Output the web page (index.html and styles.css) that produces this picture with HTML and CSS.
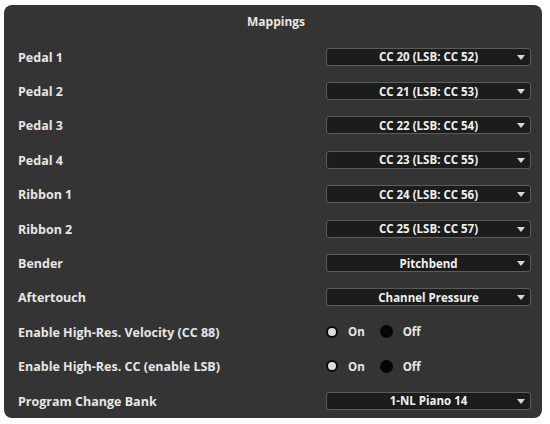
FILE: index.html
```html
<!DOCTYPE html>
<html lang="en">
<head>
  <meta charset="UTF-8">
  <title>Mappings</title>
  <link rel="stylesheet" href="styles.css">
</head>
<body>
  <div class="panel">
    <div class="title">Mappings</div>

    <div class="row">
      <span class="label">Pedal 1</span>
      <div class="select"><span>CC 20 (LSB: CC 52)</span><i class="arrow"></i></div>
    </div>
    <div class="row">
      <span class="label">Pedal 2</span>
      <div class="select"><span>CC 21 (LSB: CC 53)</span><i class="arrow"></i></div>
    </div>
    <div class="row">
      <span class="label">Pedal 3</span>
      <div class="select"><span>CC 22 (LSB: CC 54)</span><i class="arrow"></i></div>
    </div>
    <div class="row">
      <span class="label">Pedal 4</span>
      <div class="select"><span>CC 23 (LSB: CC 55)</span><i class="arrow"></i></div>
    </div>
    <div class="row">
      <span class="label">Ribbon 1</span>
      <div class="select"><span>CC 24 (LSB: CC 56)</span><i class="arrow"></i></div>
    </div>
    <div class="row">
      <span class="label">Ribbon 2</span>
      <div class="select"><span>CC 25 (LSB: CC 57)</span><i class="arrow"></i></div>
    </div>
    <div class="row">
      <span class="label">Bender</span>
      <div class="select"><span>Pitchbend</span><i class="arrow"></i></div>
    </div>
    <div class="row">
      <span class="label">Aftertouch</span>
      <div class="select"><span>Channel Pressure</span><i class="arrow"></i></div>
    </div>
    <div class="row">
      <span class="label">Enable High-Res. Velocity (CC 88)</span>
      <div class="radios">
        <span class="radio on"></span><span class="opt">On</span>
        <span class="radio"></span><span class="opt">Off</span>
      </div>
    </div>
    <div class="row">
      <span class="label">Enable High-Res. CC (enable LSB)</span>
      <div class="radios">
        <span class="radio on"></span><span class="opt">On</span>
        <span class="radio"></span><span class="opt">Off</span>
      </div>
    </div>
    <div class="row">
      <span class="label">Program Change Bank</span>
      <div class="select"><span>1-NL Piano 14</span><i class="arrow"></i></div>
    </div>
  </div>
</body>
</html>
```

FILE: styles.css
```css
body {
  margin: 0;
  background: #fff;
  font-family: "Open Sans", "Noto Sans", sans-serif;
  font-weight: 700;
  font-size: 12.5px;
  color: #e6e6e6;
}
.panel {
  margin: 5px 0 0 4px;
  width: 538px;
  height: 413px;
  box-sizing: border-box;
  padding: 0 11px 0 14px;
  background: #343434;
  border-radius: 8px;
}
.title {
  height: 34.5px;
  line-height: 34px;
  text-align: center;
  font-size: 12px;
  padding-left: 3px;
}
.row {
  height: 34.4px;
  display: flex;
  align-items: center;
  justify-content: space-between;
}
.label {
  padding-top: 1px;
}
.select {
  width: 205px;
  height: 18px;
  box-sizing: border-box;
  border: 1px solid #5c5c5c;
  border-radius: 3px;
  background: #1c1c1c;
  display: flex;
  align-items: center;
  justify-content: center;
  position: relative;
  font-size: 11.5px;
  color: #f0f0f0;
}
.arrow {
  position: absolute;
  right: 5px;
  top: 6px;
  width: 0;
  height: 0;
  border-left: 4.5px solid transparent;
  border-right: 4.5px solid transparent;
  border-top: 5px solid #d8d8d8;
}
.radios {
  width: 205px;
  display: flex;
  align-items: center;
  padding-left: 1px;
}
.radio {
  width: 13px;
  height: 13px;
  box-sizing: border-box;
  border-radius: 50%;
  background: #050505;
}
.radio.on {
  width: 12px;
  height: 12px;
  border: 2.5px solid #0a0a0a;
  background: #dcdcdc;
}
.opt {
  margin: 0 15px 0 10px;
  font-size: 11.5px;
}
```
